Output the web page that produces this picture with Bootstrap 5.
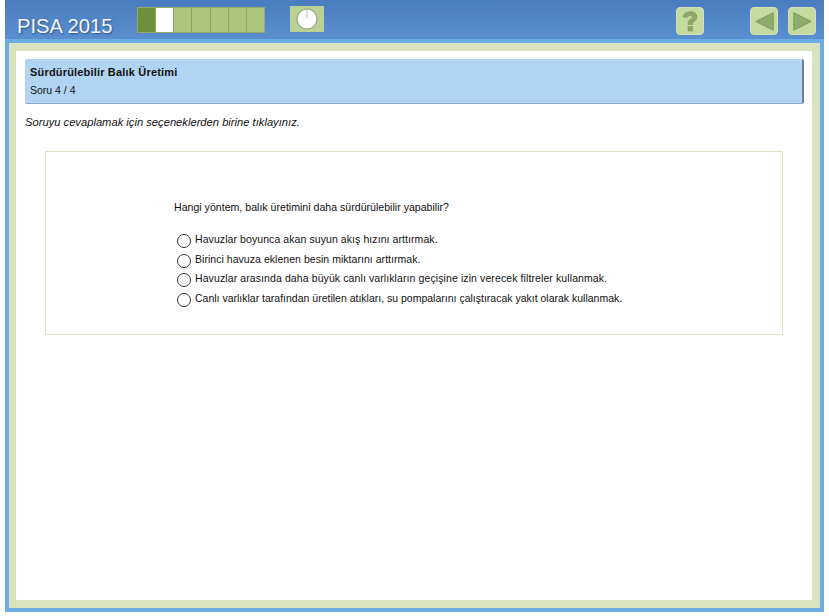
<!DOCTYPE html>
<html lang="tr"><head><meta charset="utf-8"><title>PISA 2015</title>
<link rel="stylesheet" href="https://cdn.jsdelivr.net/npm/bootstrap@5.3.0/dist/css/bootstrap.min.css">
<style>
html,body{height:616px;overflow:hidden;background:#fff;font-family:"Liberation Sans",Arial,sans-serif;color:#111}
.shell{width:819px;height:612px;margin-left:5px;background:#6cade6;display:flex;flex-direction:column}
.topbar{height:39px;background:linear-gradient(#4a7cc0,#5a8fcf);padding-left:12px}
.brand{color:#f4f7fb;font-size:20.2px;width:120px;text-shadow:1px 1px 2px #2a5288;line-height:1;padding-top:16px;white-space:nowrap}
.steps{width:128px;height:26px;margin-top:7px;background:#aec67d;border:1px solid #92ad66;display:flex}
.steps span{flex:1;border-right:1px solid #8fa765}
.steps span:last-child{border-right:0}
.steps .done{background:#6f8f3c}
.steps .now{background:#fff}
.clockbox{width:34px;height:26px;margin-top:6px;margin-left:25px;background:#b9d194}
.helpbtn{width:28px;height:28px;margin-top:7px;background:#c5da9e;border:1px solid #d2e0b4;border-radius:4px}
.frame{flex:1;margin:4px;background:#fff;border:solid #dae3bf;border-width:8px 8px 8px 7px}
.gap-a{margin-left:auto;margin-right:46px}
.gap-c{margin-left:10px;margin-right:8px}
.titlebox{margin:8px 8px 0 9px;height:45px;background:#b1d4f3;border-radius:2px;border-right:2px solid #6d7f93;border-bottom:1px solid #8fa9c2;padding:7px 5px 0;font-size:11px}
.titlebox b{display:block;line-height:13px;letter-spacing:.18px}
.titlebox div{line-height:13px;margin-top:5px;font-size:10.5px}
.hint{margin:12px 0 0 9px;font-size:11.2px;font-style:italic;line-height:13px}
.qbox{margin:22px 29px 0 29px;height:184px;border:1px solid #e0dfc0;padding:48px 0 0 128px;font-size:10.5px}
.qtext{line-height:14px;font-size:10.6px;margin-bottom:18px}
.opt{display:flex;height:20px;line-height:14px;margin:0 0 -.5px}
.dot{width:14px;height:14px;border:1px solid #333;border-radius:50%;margin:2px 4px 0 3px;flex:none;background:#fff}
.wide-a{letter-spacing:.08px}
.wide-b{letter-spacing:.04px}
.wide-c{letter-spacing:.1px}
</style></head><body>
<div class="shell">
<div class="topbar d-flex align-items-start">
<div class="brand">PISA 2015</div>
<div class="steps"><span class="done"></span><span class="now"></span><span></span><span></span><span></span><span></span><span></span></div>
<div class="clockbox d-flex align-items-center justify-content-center"><svg width="22" height="22" viewBox="0 0 22 22"><circle cx="11" cy="11" r="10" fill="#fff" stroke="#9aa97f" stroke-width="1.2"/><path d="M11 1.500v9" stroke="#a5b28c" stroke-width=".8"/></svg></div>
<div class="helpbtn gap-a d-flex align-items-center justify-content-center"><svg width="16" height="21" viewBox="0 0 16 21"><path d="M1 6C1.500 2.200 4.500 .8 8 .8c4 0 7 2 7 5.200 0 2.600-1.900 3.800-3.300 4.800-1 .8-1.200 1.400-1.200 2.700H6c0-2.600.5-3.800 2.200-5 1.200-.9 2-1.400 2-2.300 0-1-.9-1.600-2.300-1.600-1.500 0-2.300.8-2.500 2z" fill="#8da868" stroke="#7d9a58" stroke-width=".6"/><rect x="6" y="15.500" width="4.500" height="4.500" fill="#8da868" stroke="#7d9a58" stroke-width=".6"/></svg></div>
<div class="helpbtn d-flex align-items-center justify-content-center"><svg width="19" height="19" viewBox="0 0 19 19"><path d="M.8 9.500 18.200.8v17.400z" fill="#8dac6a" stroke="#7d9a58"/></svg></div>
<div class="helpbtn gap-c d-flex align-items-center justify-content-center"><svg width="19" height="19" viewBox="0 0 19 19"><path d="M18.200 9.500 .8 .8v17.400z" fill="#8dac6a" stroke="#7d9a58"/></svg></div>
</div>
<div class="frame">
<div class="titlebox"><b>Sürdürülebilir Balık Üretimi</b><div>Soru 4 / 4</div></div>
<p class="hint">Soruyu cevaplamak için seçeneklerden birine tıklayınız.</p>
<div class="qbox">
<div class="qtext">Hangi yöntem, balık üretimini daha sürdürülebilir yapabilir?</div>
<div class="opt wide-a"><span class="dot"></span>Havuzlar boyunca akan suyun akış hızını arttırmak.</div>
<div class="opt wide-b"><span class="dot"></span>Birinci havuza eklenen besin miktarını arttırmak.</div>
<div class="opt wide-c"><span class="dot"></span>Havuzlar arasında daha büyük canlı varlıkların geçişine izin verecek filtreler kullanmak.</div>
<div class="opt"><span class="dot"></span>Canlı varlıklar tarafından üretilen atıkları, su pompalarını çalıştıracak yakıt olarak kullanmak.</div>
</div>
</div>
</div>
</body></html>
